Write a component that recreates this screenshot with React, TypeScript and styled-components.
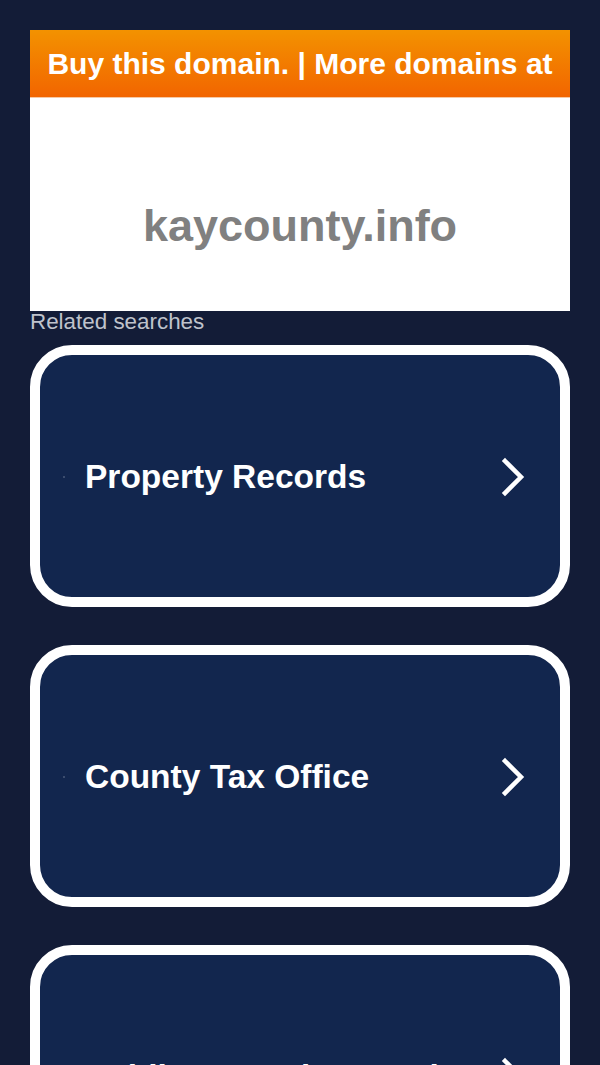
import React from "react";
import styled, { createGlobalStyle } from "styled-components";

const Global = createGlobalStyle`
  html, body { margin: 0; padding: 0; background: #131c37; }
  body { font-family: "Liberation Sans", Arial, sans-serif; }
`;

const Page = styled.div`
  padding: 30px;
  height: 1065px;
  overflow: hidden;
  box-sizing: border-box;
  background: #131c37;
`;

const Banner = styled.div`
  height: 67px;
  display: flex;
  align-items: center;
  justify-content: center;
  background: linear-gradient(#f39200, #f26500);
  color: #fff;
  font-weight: 700;
  font-size: 30px;
  white-space: nowrap;
  overflow: hidden;
  border-bottom: 1px solid #f6c9a6;
`;

const Hero = styled.div`
  height: 213px;
  background: #fff;
  display: flex;
  align-items: center;
  justify-content: center;
  padding-top: 42px;
  box-sizing: border-box;
`;

const Domain = styled.div`
  color: #808080;
  font-weight: 700;
  font-size: 45px;
`;

const Label = styled.div`
  color: #bfc3cc;
  font-size: 22.4px;
  line-height: 24px;
  margin-top: -1px;
  margin-bottom: 11px;
`;

const List = styled.div`
  display: flex;
  flex-direction: column;
  gap: 38px;
`;

const Card = styled.a`
  height: 262px;
  box-sizing: border-box;
  border: 10px solid #fff;
  border-radius: 42px;
  background: #12264e;
  display: flex;
  align-items: center;
  justify-content: space-between;
  padding: 2px 31px 0 23px;
  text-decoration: none;
  color: #fff;
`;

const Title = styled.span`
  display: flex;
  align-items: center;
  gap: 20px;
  font-weight: 700;
  font-size: 33.5px;
  white-space: nowrap;
  &::before {
    content: "";
    width: 2px;
    height: 2px;
    background: #4a5a7a;
    border-radius: 1px;
  }
`;

const Chevron = () => (
  <svg width="30" height="42" viewBox="0 0 30 42" fill="none">
    <path d="M6 5 L22 21 L6 37" stroke="#fff" strokeWidth="4.5" strokeLinecap="square" strokeLinejoin="miter" />
  </svg>
);

const items = ["Property Records", "County Tax Office", "Public Records Search"];

export default function App() {
  return (
    <>
      <Global />
      <Page>
        <Banner>Buy this domain. | More domains at</Banner>
        <Hero>
          <Domain>kaycounty.info</Domain>
        </Hero>
        <Label>Related searches</Label>
        <List>
          {items.map((t) => (
            <Card key={t} href="#">
              <Title>{t}</Title>
              <Chevron />
            </Card>
          ))}
        </List>
      </Page>
    </>
  );
}
